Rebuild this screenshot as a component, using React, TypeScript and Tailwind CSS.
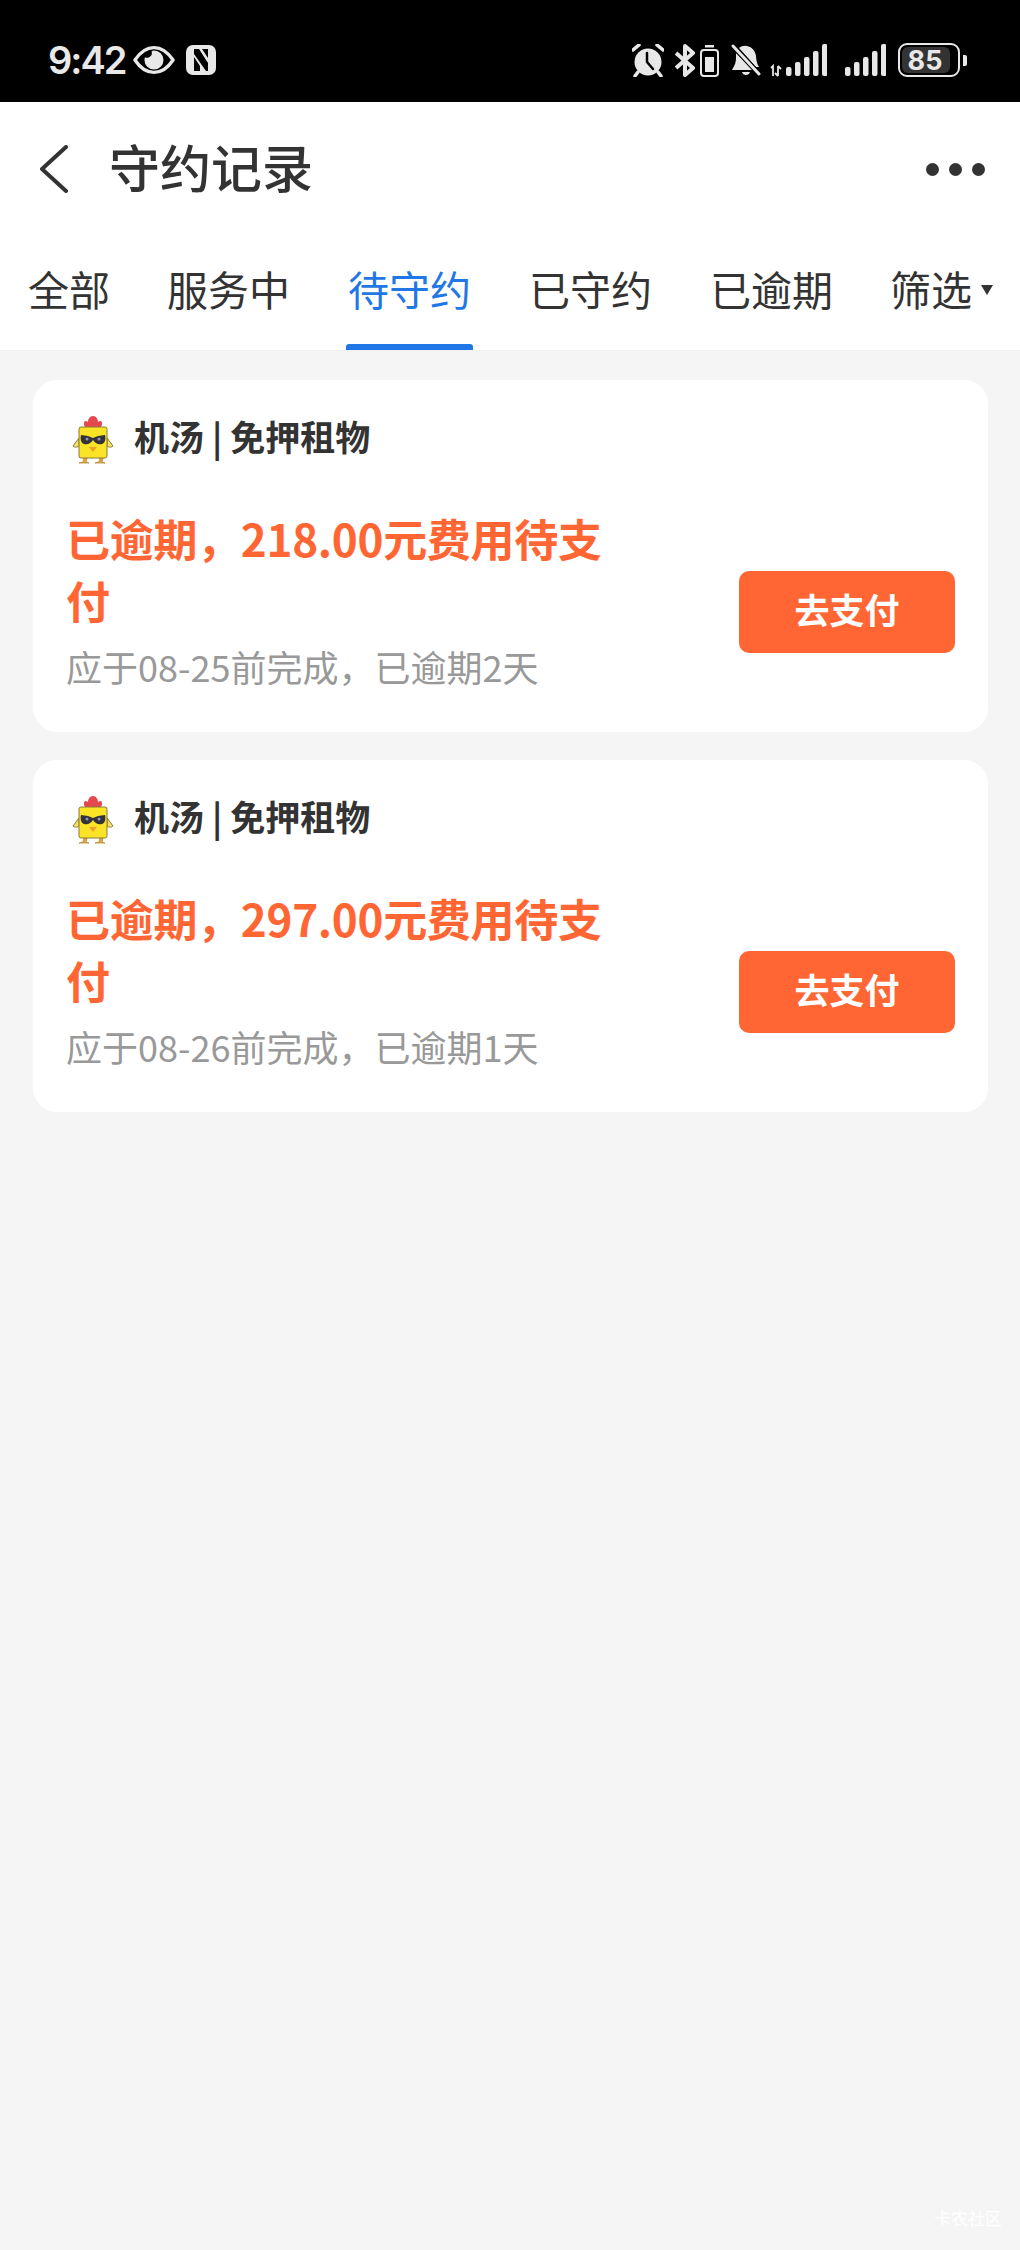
const cjk = "font-['Noto_Sans_CJK_SC','Noto_Sans',sans-serif]";

function Eye() {
  return (
    <svg width="42" height="32" viewBox="0 0 44 32" fill="none">
      <path d="M2 16C8 7 14 3 22 3s14 4 20 13c-6 9-12 13-20 13S8 25 2 16Z" stroke="#e8e8e8" strokeWidth="3.5" strokeLinejoin="round" />
      <path d="M22 6a10 10 0 1 1 0 20 10 10 0 0 1-10-10c0-1 .2-2 .5-3a5 5 0 0 0 7-6c.8-.7 1.600-1 2.500-1Z" fill="#e8e8e8" />
    </svg>
  );
}

function Nfc() {
  return (
    <svg width="30" height="32" viewBox="0 0 30 32">
      <rect x="0" y="1" width="30" height="30" rx="7" fill="#e8e8e8" />
      <path d="M8 5h5l9 14v8h-2L8 10ZM8 13l6 9v5H8ZM16 5h6v9Z" fill="#000" />
    </svg>
  );
}

function Alarm() {
  return (
    <svg width="32" height="33" viewBox="0 0 32 33" fill="none">
      <circle cx="16" cy="18" r="13.500" fill="#e8e8e8" />
      <path d="M15 9v9l6 7" stroke="#000" strokeWidth="2.500" strokeLinecap="round" strokeLinejoin="round" />
      <path d="M1 6l6-5M31 6l-6-5M6 28l-3 4M26 28l3 4" stroke="#e8e8e8" strokeWidth="3.500" strokeLinecap="round" />
    </svg>
  );
}

function BluetoothBattery() {
  return (
    <svg width="44" height="33" viewBox="0 0 44 33" fill="none">
      <path d="M1 9l17 15-8 7V2l8 7L1 24" stroke="#e8e8e8" strokeWidth="4" strokeLinejoin="round" />
      <rect x="26" y="6" width="17" height="26" rx="3" stroke="#e8e8e8" strokeWidth="2" />
      <rect x="30" y="1" width="9" height="2.500" fill="#e8e8e8" />
      <rect x="30" y="13" width="9" height="15" fill="#e8e8e8" />
    </svg>
  );
}

function BellOff() {
  return (
    <svg width="30" height="33" viewBox="0 0 30 33" fill="none">
      <path d="M8 4c6-5 16-1 17 8 .4 4 .5 7 3 11H25ZM5 9v5c0 4-1 7-4 12h21Z" fill="#e8e8e8" />
      <path d="M11 28c1 4 7 4 8 0Z" fill="#e8e8e8" />
      <path d="M2 2l26 28" stroke="#000" strokeWidth="5" />
      <path d="M2 2l26 28" stroke="#e8e8e8" strokeWidth="3" strokeLinecap="round" />
    </svg>
  );
}

function Signal({ marker }: { marker?: boolean }) {
  const bars = [
    { x: 0, h: 9 },
    { x: 9, h: 14 },
    { x: 18, h: 19 },
    { x: 27, h: 25 },
    { x: 36, h: 32 },
  ];
  return (
    <svg width={marker ? 58 : 41} height="33" viewBox={marker ? "-17 0 58 33" : "0 0 41 33"}>
      {marker && <path d="M-15 24l2-2v10M-8 22v10M-8 32l-3-3M-8 22l3 3" stroke="#e8e8e8" strokeWidth="1.800" fill="none" />}
      {bars.map((b) => (
        <rect key={b.x} x={b.x} y={32 - b.h} width="5.500" height={b.h} rx="2" fill="#e8e8e8" />
      ))}
    </svg>
  );
}

function Chick() {
  return (
    <svg width="46" height="52" viewBox="0 0 46 52">
      <path d="M16 14c-2-2-3-5-1-7 1 0 2 0 3 1 0-3 2-6 5-6s5 3 5 6c1-1 2-1 3-1 2 2 1 5-1 7Z" fill="#e5484d" />
      <path d="M9 24l-6 8c2 2 5 1 6 0ZM37 24l6 8c-2 2-5 1-6 0Z" fill="#f5e26a" stroke="#8a7a3a" strokeWidth="1" />
      <path d="M14 44l-1 4-4 1h10l-3-1 1-4ZM30 44l-1 4-4 1h10l-3-1 1-4Z" fill="#e0a840" stroke="#b98a35" strokeWidth="0.800" />
      <rect x="9" y="13" width="28" height="31" rx="2" fill="#fbe326" stroke="#8a7a3a" strokeWidth="1" />
      <path d="M11 21l7 1 5 2 5-2 7-1c1 4 0 8-3 9-4 1-7-1-9-4-2 3-5 5-9 4-3-1-4-5-3-9Z" fill="#33333b" />
      <circle cx="17" cy="25" r="1.500" fill="#8f93b8" />
      <circle cx="29" cy="25" r="1.500" fill="#8f93b8" />
      <path d="M19 33h8l-4 5Z" fill="#f0a030" />
    </svg>
  );
}

function Card({ amount, due, late }: { amount: string; due: string; late: string }) {
  return (
    <div className="h-[352px] rounded-[24px] bg-white px-[33px] pt-[34px]">
      <div className="flex h-[52px] items-center">
        <div className="ml-[4px] mr-[18px]">
          <Chick />
        </div>
        <span className="-mt-[8px] text-[35px] leading-[50px] font-bold text-[#333333]">机汤 | 免押租物</span>
      </div>
      <div className="mt-[41px] flex items-start justify-between">
        <div className="w-[560px]">
          <p className="text-[44px] leading-[62px] font-bold tracking-[-0.3px] text-[#ff6633]">已逾期，{amount}元费用待支付</p>
          <p className="mt-[10px] text-[36px] leading-[50px] text-[#999999]">
            应于{due}前完成，已逾期{late}
          </p>
        </div>
        <button className="mt-[64px] h-[82px] w-[216px] rounded-[10px] bg-[#ff6633] pb-[5px] text-[35px] font-bold text-white">
          去支付
        </button>
      </div>
    </div>
  );
}

export default function App() {
  const tabs = [
    { label: "全部", w: "w-[82px]" },
    { label: "服务中", w: "w-[125px]" },
    { label: "待守约", w: "w-[125px]" },
    { label: "已守约", w: "w-[125px]" },
    { label: "已逾期", w: "w-[125px]" },
  ];
  return (
    <div className={`relative h-[2250px] w-[1020px] overflow-hidden bg-[#f5f5f5] ${cjk}`}>
      {/* status bar */}
      <div className="flex h-[102px] items-center justify-between bg-black pl-[48px] pr-[53px] pt-[18px] text-[#e8e8e8]">
        <div className="flex items-center">
          <span className="font-['Inter',sans-serif] text-[38px] leading-[46px] font-semibold tracking-[-2px]">9:42</span>
          <span className="ml-[8px]"><Eye /></span>
          <span className="ml-[11px]"><Nfc /></span>
        </div>
        <div className="flex items-center">
          <Alarm />
          <span className="ml-[11px]"><BluetoothBattery /></span>
          <span className="ml-[12px]"><BellOff /></span>
          <span className="ml-[8px]"><Signal marker /></span>
          <span className="ml-[18px]"><Signal /></span>
          <span className="ml-[12px] flex h-[34px] w-[62px] items-center justify-center rounded-[9px] border-2 border-[#e8e8e8] p-[2px]">
            <span className="flex h-full w-[48px] items-center justify-center rounded-[6px] bg-[#333333] pr-[2px] font-['Inter',sans-serif] text-[27px] leading-none font-bold text-[#e8e8e8]">85</span>
            <span className="h-full flex-1" />
          </span>
          <span className="ml-[3px] h-[11px] w-[4px] rounded-r-[2px] bg-[#e8e8e8]" />
        </div>
      </div>

      {/* header */}
      <div className="flex h-[134px] items-center justify-between bg-white pl-[39px] pr-[35px]">
        <div className="flex items-center">
          <svg width="30" height="48" viewBox="0 0 30 48" fill="none">
            <path d="M27 2L3 24l24 22" stroke="#333333" strokeWidth="4" strokeLinecap="round" strokeLinejoin="round" />
          </svg>
          <h1 className="-mt-[6px] ml-[40px] text-[51px] leading-[60px] font-medium text-[#333333]">守约记录</h1>
        </div>
        <div className="flex gap-[10px]">
          <span className="size-[13px] rounded-full bg-[#333333]" />
          <span className="size-[13px] rounded-full bg-[#333333]" />
          <span className="size-[13px] rounded-full bg-[#333333]" />
        </div>
      </div>

      {/* tabs */}
      <div className="flex h-[115px] items-start border-b-[1px] border-[#f0f0f0] bg-white pl-[28px] pt-[24px]">
        {tabs.map((t, i) => (
          <div key={t.label} className={`${t.w} mr-[56px] flex h-[90px] flex-col items-center justify-between last:mr-[40px] ${i === 0 ? "mr-[55px]" : ""}`}>
            <span className={`text-[41px] leading-[56px] whitespace-nowrap ${i === 2 ? "text-[#2277e6]" : "text-[#333333]"}`}>{t.label}</span>
            {i === 2 && <span className="h-[6px] w-[127px] rounded-t-[3px] bg-[#2277e6]" />}
          </div>
        ))}
        <div className="flex items-center">
          <span className="text-[41px] leading-[56px] whitespace-nowrap text-[#333333]">筛选</span>
          <span className="ml-[9px] mt-[4px] h-0 w-0 border-x-[6px] border-t-[10px] border-x-transparent border-t-[#333333]" />
        </div>
      </div>

      {/* list */}
      <div className="flex flex-col gap-[28px] pl-[33px] pr-[32px] pt-[29px]">
        <Card amount="218.00" due="08-25" late="2天" />
        <Card amount="297.00" due="08-26" late="1天" />
      </div>

      {/* watermark */}
      <span className="absolute bottom-[20px] right-[18px] text-[17px] leading-[24px] text-white">卡农社区</span>
    </div>
  );
}
